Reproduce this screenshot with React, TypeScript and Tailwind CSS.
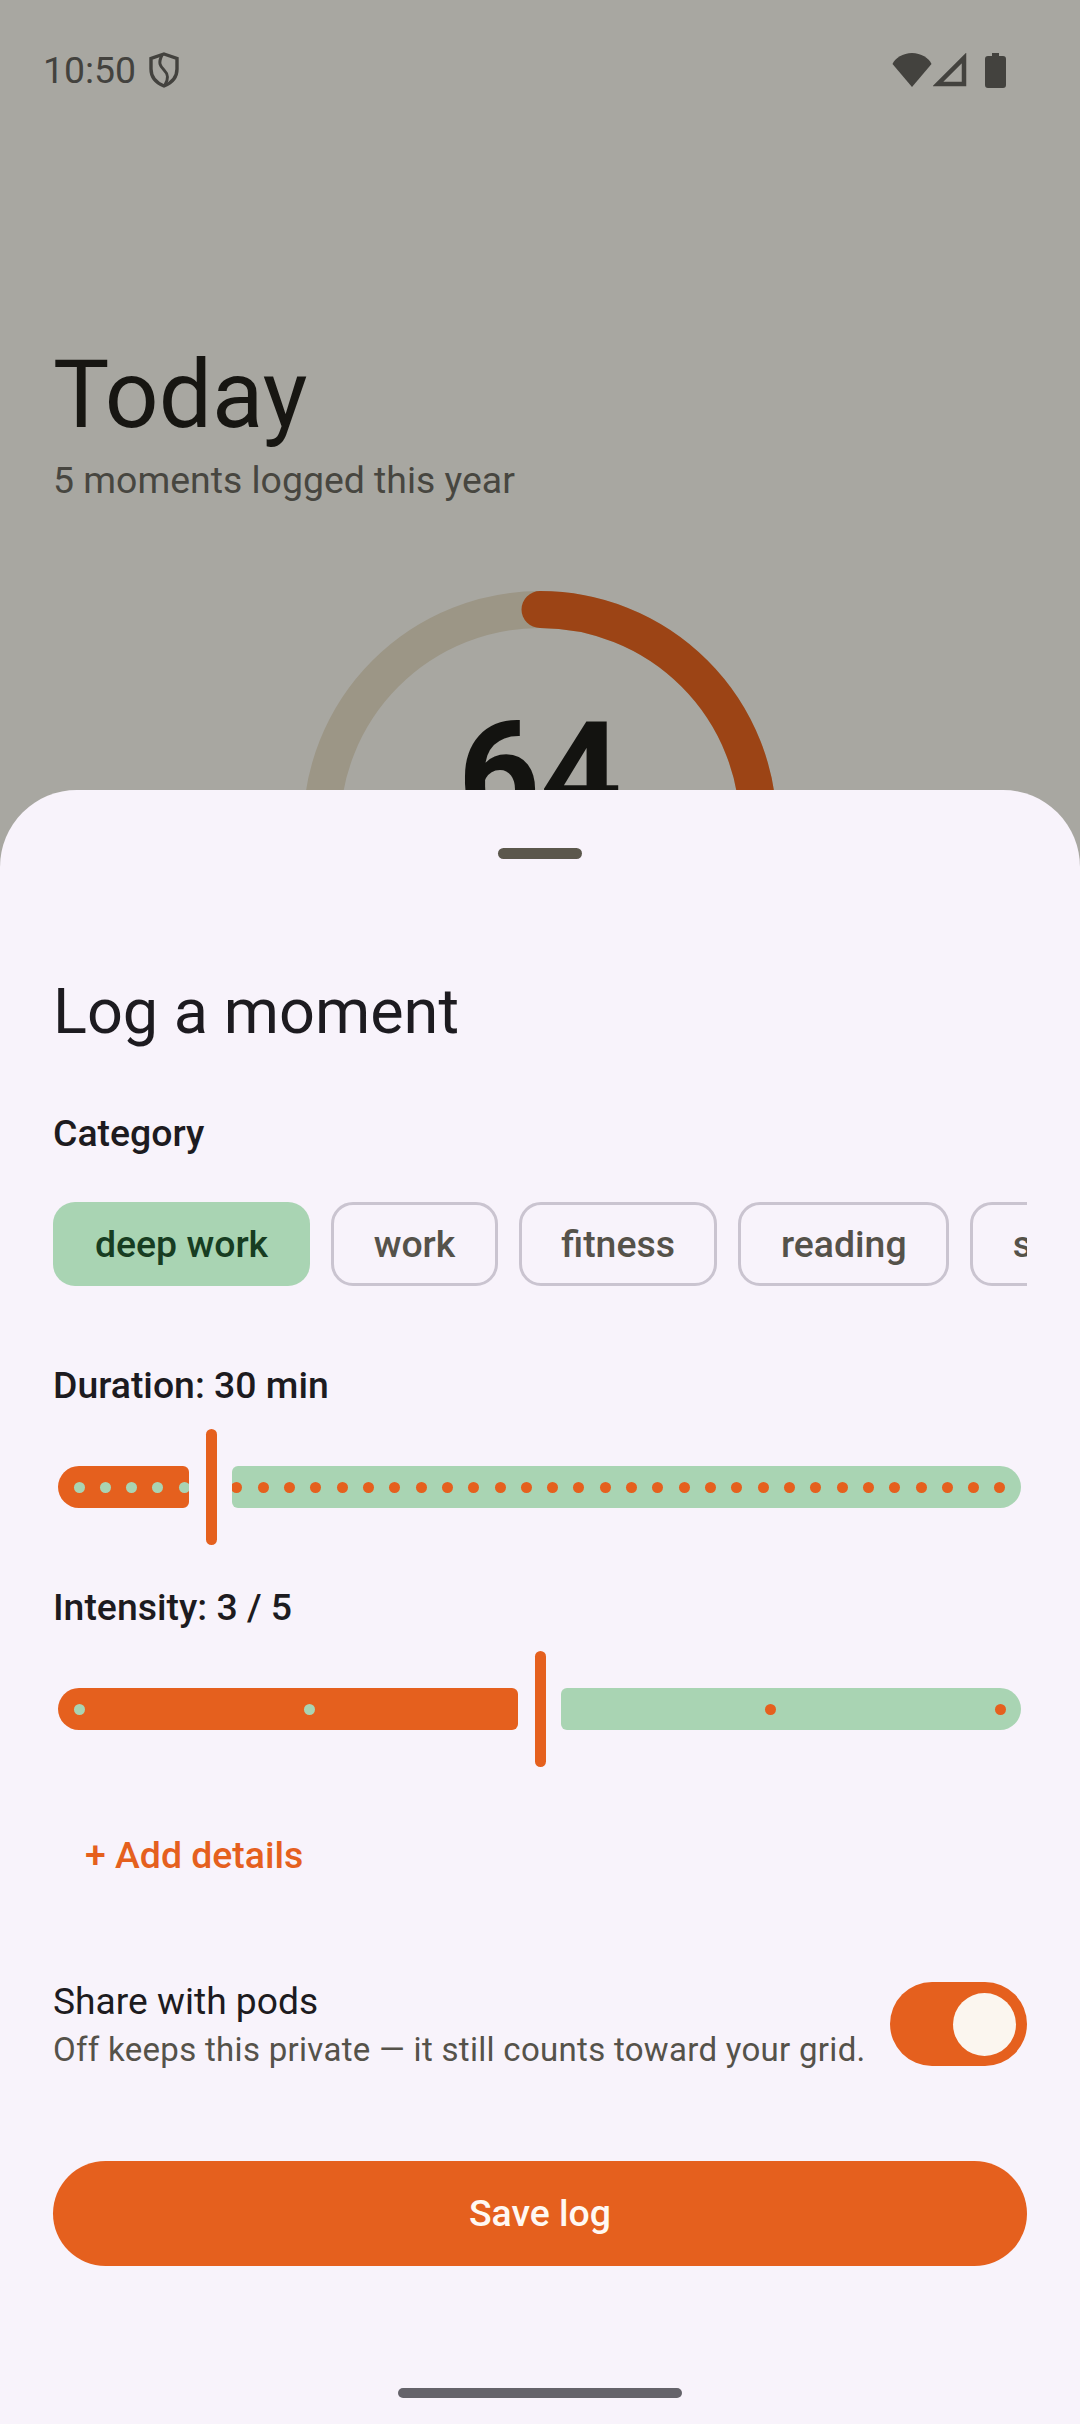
const font = { fontFamily: "Roboto, sans-serif" };

function Track({ x0, x1, left, dots }: { x0: number; x1: number; left: boolean; dots: number[] }) {
  return (
    <div
      className={`relative h-[42px] overflow-hidden ${left ? "rounded-l-[21px] rounded-r-[6px] bg-[#e5601e]" : "rounded-r-[21px] rounded-l-[6px] bg-[#a9d4b3]"}`}
      style={{ width: x1 - x0 }}
    >
      {dots
        .filter((d) => d > x0 && d - 5 < x1)
        .map((d) => (
          <span
            key={d}
            className={`absolute top-[15.5px] h-[11px] w-[11px] rounded-full ${left ? "bg-[#a9d4b3]" : "bg-[#e5601e]"}`}
            style={{ left: d - x0 - 5.5 }}
          />
        ))}
    </div>
  );
}

function Slider({ a, t, b, dots }: { a: number; t: number; b: number; dots: number[] }) {
  return (
    <div className="flex h-[116px] items-center pl-[5px]">
      <Track x0={58} x1={a} left dots={dots} />
      <div className="h-[116px] w-[11px] rounded-full bg-[#e5601e]" style={{ marginLeft: t - a }} />
      <div style={{ marginLeft: b - t - 11 }}>
        <Track x0={b} x1={1021} left={false} dots={dots} />
      </div>
    </div>
  );
}

export default function App() {
  const durationDots = Array.from({ length: 36 }, (_, i) => 79 + i * 26.314).filter((_, i) => i !== 5);
  const intensityDots = [79, 309, 770, 1000];
  return (
    <div className="relative h-[2424px] w-[1080px] overflow-hidden bg-[#a8a7a1]" style={font}>
      <div className="flex items-center justify-between pl-[43px] pr-[74px] pt-[50px]">
        <div className="flex items-center gap-[12px]">
          <span className="text-[37.4px] leading-[40px] text-[#43423e]">10:50</span>
          <svg width="32" height="36" viewBox="0 0 32 36" fill="none" stroke="#43423e" strokeWidth="3.4">
            <path d="M16 2 L29 6.5 V17 C29 25 23.5 31 16 34 C8.5 31 3 25 3 17 V6.5 Z" />
            <path d="M14 3 C10 11 12 14 16 18 C20 22 21 26 17 33" strokeWidth="3" />
          </svg>
        </div>
        <div className="flex items-center">
          <svg className="mr-[1px]" width="40" height="34" viewBox="0 0 40 34" fill="#43423e">
            <path d="M20 34 L0.5 11 C3 5 11 0 20 0 C29 0 37 5 39.5 11 Z" />
          </svg>
          <svg width="34" height="34" viewBox="0 0 34 34" fill="none" stroke="#43423e" strokeWidth="4.5">
            <path d="M31 5 V31 H5 Z" />
          </svg>
          <svg className="ml-[18px]" width="21" height="35" viewBox="0 0 21 35" fill="#43423e">
            <path d="M7 0 H14 V3 H18 Q21 3 21 6 V32 Q21 35 18 35 H3 Q0 35 0 32 V6 Q0 3 3 3 H7 Z" />
          </svg>
        </div>
      </div>

      <div className="pl-[53px] pt-[246px]">
        <h1 className="text-[94.5px] font-normal leading-[118px] text-[#171612]">Today</h1>
        <p className="-mt-[1px] text-[37.4px] leading-[55px] text-[#474640]">5 moments logged this year</p>
      </div>

      <div className="relative mx-auto mt-[83px] h-[474px] w-[474px]">
        <svg width="474" height="474" viewBox="0 0 474 474" fill="none" strokeWidth="37">
          <circle cx="237" cy="237" r="218.5" stroke="#9c9686" />
          <path d="M237 18.5 A218.5 218.5 0 0 1 455.5 237" stroke="#9c4415" strokeLinecap="round" />
        </svg>
        <div className="absolute inset-x-0 top-[102px] text-center text-[143px] font-bold leading-[162px] text-[#131310]">64</div>
      </div>

      <div className="absolute inset-x-0 bottom-0 h-[1634px] rounded-t-[77px] bg-[#f8f3fb] px-[53px] pt-[58px]">
        <div className="mx-auto h-[11px] w-[84px] rounded-full bg-[#5b574c]" />

        <h2 className="mt-[109px] text-[63px] font-normal leading-[88px] text-[#1d1b20]">Log a moment</h2>
        <p className="mt-[50px] text-[37.4px] font-medium leading-[55px] text-[#1d1b20]">Category</p>

        <div className="mt-[41px] flex gap-[21px] overflow-hidden">
          <div className="flex h-[84px] shrink-0 items-center rounded-[22px] bg-[#a9d4b3] px-[42px] text-[37.4px] font-medium text-[#173d22]">deep work</div>
          {["work", "fitness", "reading", "sleep"].map((c) => (
            <div key={c} className="flex h-[84px] shrink-0 items-center rounded-[22px] border-[3px] border-[#cac4d0] px-[39.5px] text-[37.4px] font-medium text-[#55524a]">
              {c}
            </div>
          ))}
        </div>

        <p className="mt-[72px] text-[37.4px] font-medium leading-[55px] text-[#1d1b20]">Duration: 30 min</p>
        <div className="mt-[16px]">
          <Slider a={189} t={206} b={232} dots={durationDots} />
        </div>

        <p className="mt-[35px] text-[37.4px] font-medium leading-[55px] text-[#1d1b20]">Intensity: 3 / 5</p>
        <div className="mt-[16px]">
          <Slider a={518} t={535} b={561} dots={intensityDots} />
        </div>

        <p className="ml-[32px] mt-[61px] text-[37.4px] font-medium leading-[55px] text-[#e5601e]">+ Add details</p>

        <div className="mt-[99px] flex h-[84px] items-center justify-between">
          <div className="pt-[3px]">
            <p className="whitespace-nowrap text-[37.2px] leading-[48px] text-[#1d1b20]">Share with pods</p>
            <p className="whitespace-nowrap text-[33px] leading-[49px] tracking-[0.3px] text-[#55524a]">Off keeps this private — it still counts toward your grid.</p>
          </div>
          <div className="flex h-[84px] w-[137px] shrink-0 items-center justify-end rounded-full bg-[#e5601e] pr-[11px]">
            <div className="h-[63px] w-[63px] rounded-full bg-[#fbf6ef]" />
          </div>
        </div>

        <div className="mt-[95px] flex h-[105px] items-center justify-center rounded-full bg-[#e5601e] text-[37.4px] font-medium text-[#fff8f2]">Save log</div>

        <div className="mx-auto mt-[122px] h-[10px] w-[284px] rounded-full bg-[#65636a]" />
      </div>
    </div>
  );
}
